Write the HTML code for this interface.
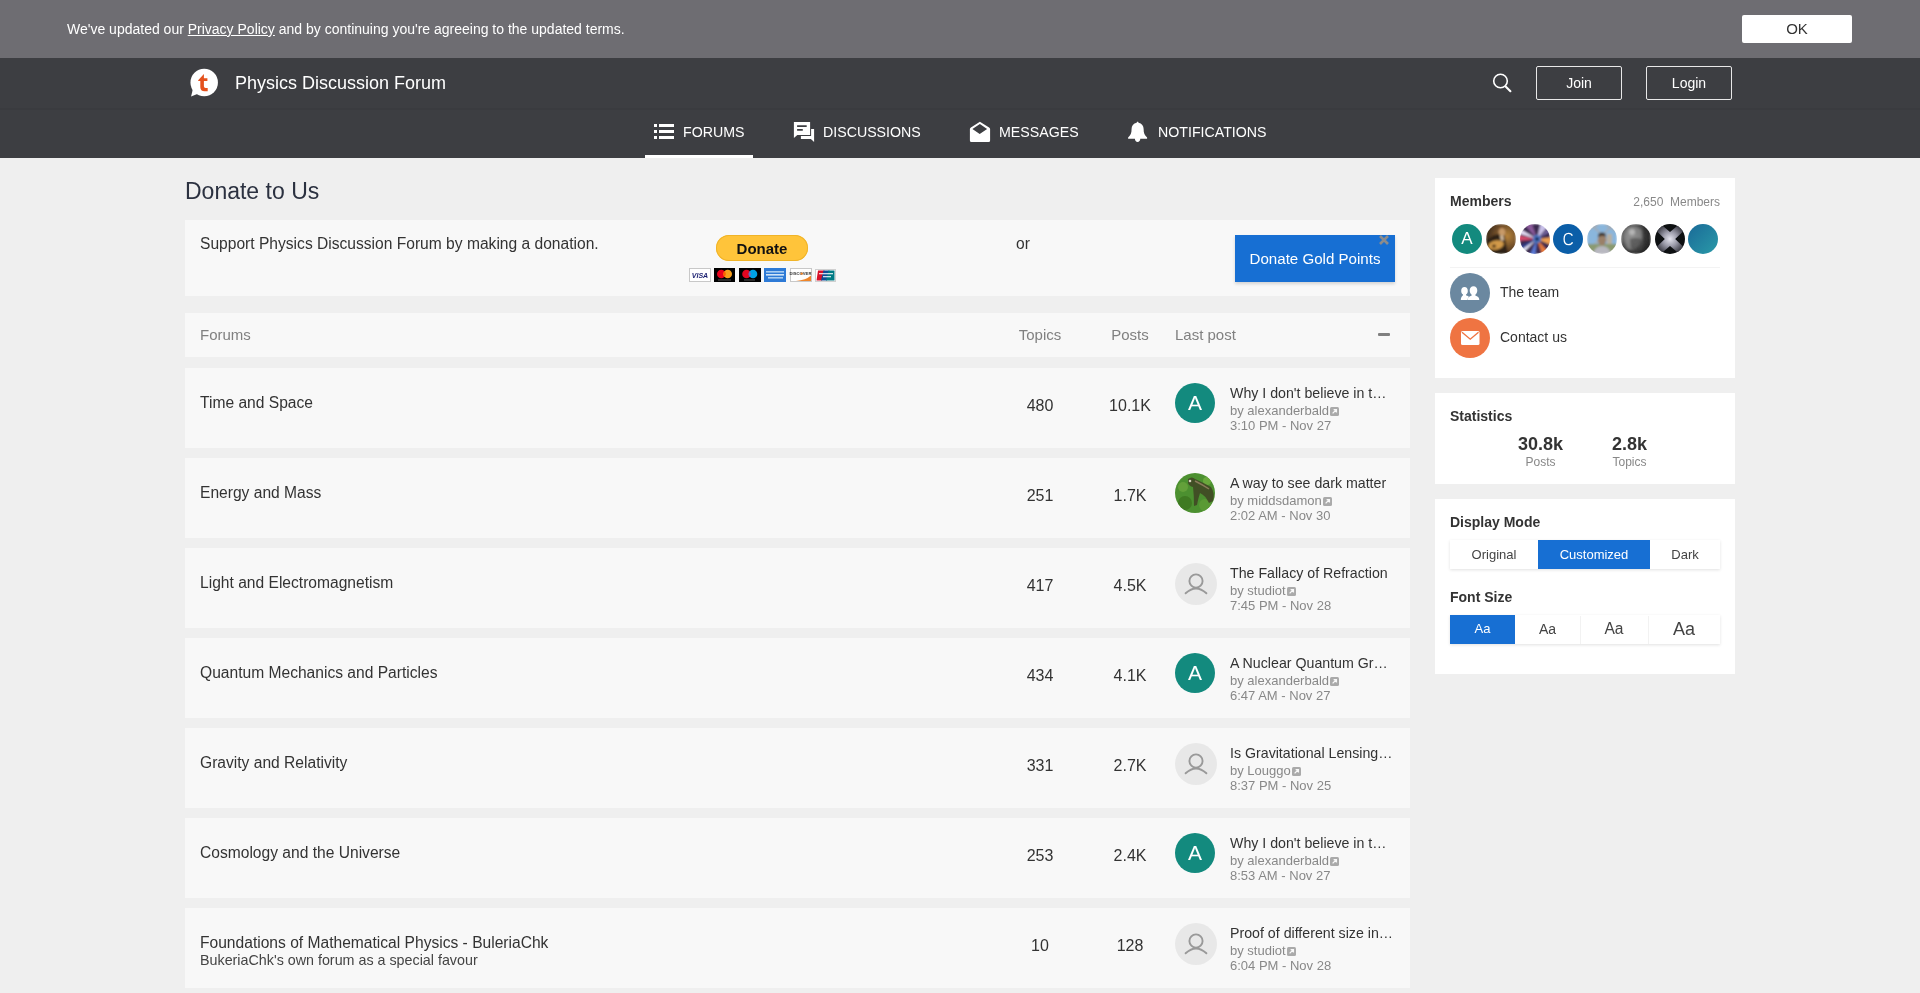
<!DOCTYPE html>
<html><head><meta charset="utf-8">
<style>
*{box-sizing:border-box;margin:0;padding:0}
html,body{width:1920px;height:993px;overflow:hidden}
body{background:#efefef;font-family:"Liberation Sans",sans-serif;color:#333;position:relative}
.abs{position:absolute}
#wrap{position:absolute;left:0;top:0;width:1920px;height:993px;will-change:transform}
svg{display:block}
#cookie{left:0;top:0;width:1920px;height:58px;background:#6e6d72}
#cookie .t{left:67px;top:20px;font-size:14px;color:#fff;white-space:nowrap;line-height:18px}
#ok{left:1742px;top:15px;width:110px;height:28px;background:#fff;border-radius:2px;font-size:15px;color:#333;text-align:center;line-height:28px}
#hdr{left:0;top:58px;width:1920px;height:50px;background:#3d3e42}
#nav{left:0;top:108px;width:1920px;height:50px;background:#3d3e42;border-top:2px solid #3a3b3f}
.title{left:235px;top:72px;font-size:18px;color:#fff;white-space:nowrap;line-height:22px}
.btn{top:66px;width:86px;height:34px;border:1px solid #e8e8e8;border-radius:2px;color:#fff;font-size:14px;text-align:center;line-height:32px}
.navi{top:122px;color:#fff;font-size:14.2px;line-height:20px;white-space:nowrap}
.card{background:#f8f8f8}
.side{background:#fff}
.fname{left:200px;font-size:15.6px;line-height:20px;color:#333;white-space:nowrap}
.fdesc{left:200px;font-size:14.3px;line-height:18px;color:#444;white-space:nowrap}
.num{font-size:16px;line-height:20px;color:#333;text-align:center;width:80px}
.lp-t{left:1230px;font-size:14.2px;line-height:18px;color:#333;white-space:nowrap}
.lp-s{left:1230px;font-size:13px;line-height:16px;color:#888;white-space:nowrap}
.lp-s .ext{display:inline-block;vertical-align:-1px;margin-left:1px}
.av{left:1175px;width:40px;height:40px;border-radius:50%}
.avA{background:#138a7e;color:#fff;font-size:21px;line-height:40px;text-align:center}
.avP{background:radial-gradient(circle at 55% 40%,#6b7a45 0%,#4e7a28 35%,#3f6e1f 70%,#2c4e16 100%)}
.avD{left:1175px;width:42px;height:42px;border-radius:50%;background:#e8e8e8}
.hd{font-size:15px;line-height:20px;color:#808080;white-space:nowrap}
.sh{left:1450px;font-size:14px;font-weight:700;line-height:18px;color:#333;white-space:nowrap}
.mav{top:224px;width:30px;height:30px;border-radius:50%}
.seg{background:#fff;box-shadow:0 1px 3px rgba(0,0,0,0.12)}
.segt{font-size:13px;line-height:16px;color:#444;text-align:center;white-space:nowrap}
</style></head><body><div id="wrap">
<div id="cookie" class="abs">
  <div class="t abs">We've updated our <u>Privacy Policy</u> and by continuing you're agreeing to the updated terms.</div>
  <div id="ok" class="abs">OK</div>
</div>
<div id="hdr" class="abs"></div>
<div id="nav" class="abs"></div>
<svg class="abs" style="left:188px;top:66px" width="34" height="34" viewBox="0 0 34 34">
  <circle cx="16.2" cy="16.5" r="13.75" fill="#fff"/>
  <path d="M3.1 30.6 L5 22.5 L10.5 27.6 Z" fill="#fff"/>
  <path d="M15.9 8 V12.2 H19.4 V15 H15.9 V20.3 Q15.9 22 17.6 22 H19.7 V25.2 H16.6 Q12.3 25.2 12.3 21 V15 H10.2 V14.2 Z" fill="#e4511d"/>
</svg>
<div class="title abs">Physics Discussion Forum</div>
<svg class="abs" style="left:1488px;top:68px" width="28" height="28" viewBox="0 0 28 28">
  <circle cx="12.5" cy="13" r="6.8" fill="none" stroke="#fff" stroke-width="1.6"/>
  <path d="M17.6 18.4 L22.4 23.2" stroke="#fff" stroke-width="2.1" stroke-linecap="round"/>
</svg>
<div class="btn abs" style="left:1536px">Join</div>
<div class="btn abs" style="left:1646px">Login</div>

<svg class="abs" style="left:650px;top:118px" width="30" height="27" viewBox="0 0 30 27">
  <rect x="4" y="6" width="3" height="3" fill="#fff"/><rect x="9" y="6" width="15" height="3" fill="#fff"/>
  <rect x="4" y="12" width="3" height="3" fill="#fff"/><rect x="9" y="12" width="15" height="3" fill="#fff"/>
  <rect x="4" y="18" width="3" height="3" fill="#fff"/><rect x="9" y="18" width="15" height="3" fill="#fff"/>
</svg>
<div class="navi abs" style="left:683px">FORUMS</div>
<div class="abs" style="left:645px;top:155px;width:108px;height:3px;background:#fff"></div>
<svg class="abs" style="left:790px;top:118px" width="30" height="27" viewBox="0 0 30 27">
  <path fill="#fff" fill-rule="evenodd" d="M3.9 3.9 H20.1 V17 H7.3 L3.9 20.1 Z M7.1 7.2 V8.9 H16.7 V7.2 Z M7.1 11.1 V12.8 H12.8 V11.1 Z"/>
  <path fill="#fff" d="M21.1 10.9 H24.1 V23.9 L20.9 21.1 H10.9 V18.1 H21.1 Z"/>
</svg>
<div class="navi abs" style="left:823px">DISCUSSIONS</div>
<svg class="abs" style="left:966px;top:118px" width="30" height="27" viewBox="0 0 30 27">
  <path fill="#fff" fill-rule="evenodd" d="M3.9 10.9 Q3.9 10 4.9 9.4 L13.9 3.8 L23.1 9.4 Q24.1 10 24.1 10.9 V22.6 Q24.1 24.1 22.6 24.1 H5.4 Q3.9 24.1 3.9 22.6 Z M13.9 5.9 L6.4 10.9 L13.7 16 L21.1 10.9 Z"/>
</svg>
<div class="navi abs" style="left:999px">MESSAGES</div>
<svg class="abs" style="left:1124px;top:118px" width="30" height="27" viewBox="0 0 30 27">
  <path fill="#fff" d="M13.6 3.8 C14.3 3.8 14.5 4.3 14.5 4.8 C17.9 5.6 19.6 7.8 19.6 10.8 C19.6 15.2 20.6 17.4 23.1 19.5 V20.7 H4.1 V19.5 C6.6 17.4 7.6 15.2 7.6 10.8 C7.6 7.8 9.3 5.6 12.7 4.8 C12.7 4.3 12.9 3.8 13.6 3.8 Z M10.9 20.7 H16.3 C16.3 22.6 15.1 23.9 13.6 23.9 C12.1 23.9 10.9 22.6 10.9 20.7 Z"/>
</svg>
<div class="navi abs" style="left:1158px">NOTIFICATIONS</div>

<div class="abs" style="left:185px;top:177px;font-size:23px;line-height:28px;color:#2b3140;white-space:nowrap">Donate to Us</div>

<div class="card abs" style="left:185px;top:220px;width:1225px;height:76px"></div>
<div class="abs" style="left:200px;top:233.6px;font-size:15.6px;line-height:20px;color:#333;white-space:nowrap">Support Physics Discussion Forum by making a donation.</div>
<div class="abs" style="left:716px;top:235px;width:92px;height:26px;border-radius:13px;background:#ffc43a;box-shadow:inset 0 0 0 1px #f0b429"></div>
<div class="abs" style="left:716px;top:238.5px;width:92px;text-align:center;font-size:15px;font-weight:700;line-height:20px;color:#111">Donate</div>
<svg class="abs" style="left:688px;top:267px" width="150" height="16" viewBox="0 0 150 16">
  <rect x="1.5" y="1.5" width="21" height="13" fill="#fff" stroke="#c8c8c8" stroke-width="1"/>
  <text x="12" y="11" font-family="Liberation Sans" font-size="7" font-weight="700" font-style="italic" fill="#1a1f71" text-anchor="middle">VISA</text>
  <rect x="26" y="1" width="21" height="14" fill="#000"/>
  <circle cx="33.3" cy="7" r="4.3" fill="#eb001b"/><circle cx="39.7" cy="7" r="4.3" fill="#f79e1b"/><path d="M36.5 4.1 A4.3 4.3 0 0 1 36.5 9.9 A4.3 4.3 0 0 1 36.5 4.1 Z" fill="#ff5f00"/>
  <rect x="30" y="12.5" width="13" height="1" fill="#555"/>
  <rect x="51" y="1" width="22" height="14" fill="#000"/>
  <circle cx="58.5" cy="7" r="4.3" fill="#e40620"/><circle cx="65" cy="7" r="4.3" fill="#00a2e5"/><path d="M61.75 4.2 A4.3 4.3 0 0 1 61.75 9.8 A4.3 4.3 0 0 1 61.75 4.2 Z" fill="#6c6bbd"/>
  <rect x="56" y="12.5" width="11" height="1" fill="#555"/>
  <rect x="76" y="1" width="22" height="14" fill="#2d7ad6"/>
  <rect x="78" y="4" width="18" height="1.6" fill="#a8cdf2"/><rect x="78" y="7" width="18" height="1.6" fill="#cfe4f8"/><rect x="80" y="10" width="15" height="1.6" fill="#a8cdf2"/>
  <rect x="102.5" y="1.5" width="21" height="13" fill="#fff" stroke="#c8c8c8" stroke-width="1"/>
  <path d="M108 14 Q118 13 123 8.5 V14 Z" fill="#f0862a"/>
  <text x="112.5" y="8" font-family="Liberation Sans" font-size="4.2" font-weight="700" fill="#333" text-anchor="middle">DISCOVER</text>
  <circle cx="113.7" cy="6.6" r="1.2" fill="#f0862a"/>
  <rect x="127.5" y="2.5" width="20" height="12" fill="#fff" stroke="#d0d0d0" stroke-width="1"/>
  <path d="M130 3.5 H136.5 L134 13.5 H128.5 Z" fill="#d8102a"/><path d="M135.5 3.5 H141.5 L139 13.5 H133 Z" fill="#0e4c96"/><path d="M140.5 3.5 H146.5 V13.5 H138 Z" fill="#007b84"/>
  <rect x="131" y="6" width="14" height="1.3" fill="#fff" opacity="0.8"/><rect x="135" y="9" width="8" height="1.3" fill="#fff" opacity="0.8"/>
</svg>
<div class="abs" style="left:1016px;top:233.6px;font-size:15.6px;line-height:20px;color:#333">or</div>
<div class="abs" style="left:1235px;top:235px;width:160px;height:47px;background:#176fd3;box-shadow:0 2px 3px rgba(0,0,0,0.15)"></div>
<div class="abs" style="left:1235px;top:248.9px;width:160px;text-align:center;font-size:15.1px;line-height:20px;color:#fff;white-space:nowrap">Donate Gold Points</div>
<svg class="abs" style="left:1378px;top:234px" width="12" height="12" viewBox="0 0 12 12"><path d="M2 2 L10 10 M10 2 L2 10" stroke="#8c8c8c" stroke-width="2.6"/></svg>

<div class="card abs" style="left:185px;top:313px;width:1225px;height:44px"></div>
<div class="hd abs" style="left:200px;top:324.7px">Forums</div>
<div class="hd abs" style="left:1000px;top:324.5px;width:80px;text-align:center">Topics</div>
<div class="hd abs" style="left:1090px;top:324.5px;width:80px;text-align:center">Posts</div>
<div class="hd abs" style="left:1175px;top:324.5px">Last post</div>
<div class="abs" style="left:1378px;top:333px;width:12px;height:3px;background:#808080;border-radius:1px"></div>
<div class="card abs" style="left:185px;top:368px;width:1225px;height:80px"></div>
<div class="fname abs" style="top:393px">Time and Space</div>
<div class="num abs" style="left:1000px;top:395.5px">480</div>
<div class="num abs" style="left:1090px;top:395.5px">10.1K</div>
<div class="av avA abs" style="top:383px">A</div>
<div class="lp-t abs" style="top:384px">Why I don't believe in t…</div>
<div class="lp-s abs" style="top:403px">by alexanderbald<svg class="ext" width="9" height="9" viewBox="0 0 9 9"><rect x="0" y="0" width="9" height="9" rx="1.5" fill="#aaa"/><path d="M2.6 6.4 L6.2 2.8 M3.6 2.6 H6.4 V5.4" stroke="#f8f8f8" stroke-width="1.3" fill="none"/></svg></div>
<div class="lp-s abs" style="top:418px">3:10 PM - Nov 27</div>
<div class="card abs" style="left:185px;top:458px;width:1225px;height:80px"></div>
<div class="fname abs" style="top:483px">Energy and Mass</div>
<div class="num abs" style="left:1000px;top:485.5px">251</div>
<div class="num abs" style="left:1090px;top:485.5px">1.7K</div>
<svg class="abs" style="left:1175px;top:473px" width="40" height="40" viewBox="0 0 40 40"><defs><clipPath id="cp1"><circle cx="20" cy="20" r="20"/></clipPath></defs><g clip-path="url(#cp1)"><rect width="40" height="40" fill="#4c9030"/><circle cx="8" cy="14" r="5" fill="#63a03a"/><circle cx="10" cy="30" r="7" fill="#3f7a22"/><circle cx="30" cy="32" r="6" fill="#5a9a34"/><circle cx="32" cy="8" r="4" fill="#6aa83c"/><path d="M13 6 Q17 3 20 6 Q27 9 36 14 Q40 20 38 28 L34 30 Q30 22 25 20 Q23 26 22 32 L19 33 Q19 22 18 14 Q14 13 13 10 Z" fill="#3e3a22" opacity="0.75"/><circle cx="15" cy="8" r="1.3" fill="#d8d0c0"/><path d="M20 8 Q28 12 34 16" stroke="#8a7a5a" stroke-width="1.5" fill="none"/></g></svg>
<div class="lp-t abs" style="top:474px">A way to see dark matter</div>
<div class="lp-s abs" style="top:493px">by middsdamon<svg class="ext" width="9" height="9" viewBox="0 0 9 9"><rect x="0" y="0" width="9" height="9" rx="1.5" fill="#aaa"/><path d="M2.6 6.4 L6.2 2.8 M3.6 2.6 H6.4 V5.4" stroke="#f8f8f8" stroke-width="1.3" fill="none"/></svg></div>
<div class="lp-s abs" style="top:508px">2:02 AM - Nov 30</div>
<div class="card abs" style="left:185px;top:548px;width:1225px;height:80px"></div>
<div class="fname abs" style="top:573px">Light and Electromagnetism</div>
<div class="num abs" style="left:1000px;top:575.5px">417</div>
<div class="num abs" style="left:1090px;top:575.5px">4.5K</div>
<div class="avD abs" style="top:563px"><svg width="42" height="42" viewBox="0 0 42 42"><circle cx="21" cy="18" r="6.6" fill="none" stroke="#999" stroke-width="1.9"/><path d="M10.6 30.3 Q21 20.5 31.4 30.3" fill="none" stroke="#999" stroke-width="1.9" stroke-linecap="round"/></svg></div>
<div class="lp-t abs" style="top:564px">The Fallacy of Refraction</div>
<div class="lp-s abs" style="top:583px">by studiot<svg class="ext" width="9" height="9" viewBox="0 0 9 9"><rect x="0" y="0" width="9" height="9" rx="1.5" fill="#aaa"/><path d="M2.6 6.4 L6.2 2.8 M3.6 2.6 H6.4 V5.4" stroke="#f8f8f8" stroke-width="1.3" fill="none"/></svg></div>
<div class="lp-s abs" style="top:598px">7:45 PM - Nov 28</div>
<div class="card abs" style="left:185px;top:638px;width:1225px;height:80px"></div>
<div class="fname abs" style="top:663px">Quantum Mechanics and Particles</div>
<div class="num abs" style="left:1000px;top:665.5px">434</div>
<div class="num abs" style="left:1090px;top:665.5px">4.1K</div>
<div class="av avA abs" style="top:653px">A</div>
<div class="lp-t abs" style="top:654px">A Nuclear Quantum Gr…</div>
<div class="lp-s abs" style="top:673px">by alexanderbald<svg class="ext" width="9" height="9" viewBox="0 0 9 9"><rect x="0" y="0" width="9" height="9" rx="1.5" fill="#aaa"/><path d="M2.6 6.4 L6.2 2.8 M3.6 2.6 H6.4 V5.4" stroke="#f8f8f8" stroke-width="1.3" fill="none"/></svg></div>
<div class="lp-s abs" style="top:688px">6:47 AM - Nov 27</div>
<div class="card abs" style="left:185px;top:728px;width:1225px;height:80px"></div>
<div class="fname abs" style="top:753px">Gravity and Relativity</div>
<div class="num abs" style="left:1000px;top:755.5px">331</div>
<div class="num abs" style="left:1090px;top:755.5px">2.7K</div>
<div class="avD abs" style="top:743px"><svg width="42" height="42" viewBox="0 0 42 42"><circle cx="21" cy="18" r="6.6" fill="none" stroke="#999" stroke-width="1.9"/><path d="M10.6 30.3 Q21 20.5 31.4 30.3" fill="none" stroke="#999" stroke-width="1.9" stroke-linecap="round"/></svg></div>
<div class="lp-t abs" style="top:744px">Is Gravitational Lensing…</div>
<div class="lp-s abs" style="top:763px">by Louggo<svg class="ext" width="9" height="9" viewBox="0 0 9 9"><rect x="0" y="0" width="9" height="9" rx="1.5" fill="#aaa"/><path d="M2.6 6.4 L6.2 2.8 M3.6 2.6 H6.4 V5.4" stroke="#f8f8f8" stroke-width="1.3" fill="none"/></svg></div>
<div class="lp-s abs" style="top:778px">8:37 PM - Nov 25</div>
<div class="card abs" style="left:185px;top:818px;width:1225px;height:80px"></div>
<div class="fname abs" style="top:843px">Cosmology and the Universe</div>
<div class="num abs" style="left:1000px;top:845.5px">253</div>
<div class="num abs" style="left:1090px;top:845.5px">2.4K</div>
<div class="av avA abs" style="top:833px">A</div>
<div class="lp-t abs" style="top:834px">Why I don't believe in t…</div>
<div class="lp-s abs" style="top:853px">by alexanderbald<svg class="ext" width="9" height="9" viewBox="0 0 9 9"><rect x="0" y="0" width="9" height="9" rx="1.5" fill="#aaa"/><path d="M2.6 6.4 L6.2 2.8 M3.6 2.6 H6.4 V5.4" stroke="#f8f8f8" stroke-width="1.3" fill="none"/></svg></div>
<div class="lp-s abs" style="top:868px">8:53 AM - Nov 27</div>
<div class="card abs" style="left:185px;top:908px;width:1225px;height:80px"></div>
<div class="fname abs" style="top:933px">Foundations of Mathematical Physics - BuleriaChk</div>
<div class="fdesc abs" style="top:950.7px">BukeriaChk's own forum as a special favour</div>
<div class="num abs" style="left:1000px;top:935.5px">10</div>
<div class="num abs" style="left:1090px;top:935.5px">128</div>
<div class="avD abs" style="top:923px"><svg width="42" height="42" viewBox="0 0 42 42"><circle cx="21" cy="18" r="6.6" fill="none" stroke="#999" stroke-width="1.9"/><path d="M10.6 30.3 Q21 20.5 31.4 30.3" fill="none" stroke="#999" stroke-width="1.9" stroke-linecap="round"/></svg></div>
<div class="lp-t abs" style="top:924px">Proof of different size in…</div>
<div class="lp-s abs" style="top:943px">by studiot<svg class="ext" width="9" height="9" viewBox="0 0 9 9"><rect x="0" y="0" width="9" height="9" rx="1.5" fill="#aaa"/><path d="M2.6 6.4 L6.2 2.8 M3.6 2.6 H6.4 V5.4" stroke="#f8f8f8" stroke-width="1.3" fill="none"/></svg></div>
<div class="lp-s abs" style="top:958px">6:04 PM - Nov 28</div><div class="side abs" style="left:1435px;top:178px;width:300px;height:200px"></div>
<div class="sh abs" style="top:192px">Members</div>
<div class="abs" style="left:1560px;top:193.6px;width:160px;text-align:right;font-size:12px;line-height:16px;color:#888;white-space:nowrap">2,650&nbsp; Members</div>
<div class="mav abs" style="left:1452px;background:#138a7e;color:#fff;font-size:17px;line-height:30px;text-align:center">A</div>
<svg class="abs" style="left:1486px;top:224px" width="30" height="30" viewBox="0 0 30 30"><defs><clipPath id="c2"><circle cx="15" cy="15" r="15"/></clipPath><filter id="fc2" x="-10%" y="-10%" width="120%" height="120%"><feGaussianBlur stdDeviation="0.9"/></filter>
<radialGradient id="g2" cx="0.7" cy="0.4" r="0.7"><stop offset="0" stop-color="#b8843a"/><stop offset="0.6" stop-color="#6a4a28"/><stop offset="1" stop-color="#3a2818"/></radialGradient></defs>
<g clip-path="url(#c2)"><g filter="url(#fc2)"><rect width="30" height="30" fill="url(#g2)"/>
<path d="M4 14 Q10 9 18 10 L22 30 H0 V16 Z" fill="#2e2016"/>
<ellipse cx="16" cy="8" rx="3.2" ry="4" fill="#c89a68"/><path d="M12.5 6 Q16 1.5 19.5 6 L19 4 Q16 1 13 4 Z" fill="#7a4a20"/>
<path d="M14 12 L17 11 L18 16 L15 17 Z" fill="#d8c0a0"/>
<ellipse cx="10" cy="21" rx="8" ry="4.5" fill="#d29a48" transform="rotate(-12 10 21)"/>
<ellipse cx="8" cy="22" rx="2" ry="1.6" fill="#3a2410"/></g></g></svg>
<svg class="abs" style="left:1519.5px;top:224px" width="30" height="30" viewBox="0 0 30 30"><defs><clipPath id="c3"><circle cx="15" cy="15" r="15"/></clipPath><filter id="fc3" x="-10%" y="-10%" width="120%" height="120%"><feGaussianBlur stdDeviation="0.9"/></filter></defs>
<g clip-path="url(#c3)"><g filter="url(#fc3)"><rect width="30" height="30" fill="#3a2a50"/>
<g transform="translate(17 15)">
<path d="M0 0 L-20 -12 L-20 -6 Z" fill="#e8e0f8"/><path d="M0 0 L-20 -4 L-20 2 Z" fill="#d84a6a"/>
<path d="M0 0 L-18 8 L-14 14 Z" fill="#f0f0ff"/><path d="M0 0 L-8 18 L-2 18 Z" fill="#5a7ad8"/>
<path d="M0 0 L6 18 L14 16 Z" fill="#e87a3a"/><path d="M0 0 L18 8 L18 -2 Z" fill="#f0a050"/>
<path d="M0 0 L14 -16 L4 -18 Z" fill="#c8c0e8"/><path d="M0 0 L-6 -18 L-14 -16 Z" fill="#8a5a9a"/>
<path d="M0 0 L-20 14 L-20 8 Z" fill="#2a3a8a"/><path d="M0 0 L18 -10 L18 -16 Z" fill="#7a6aaa"/>
<circle r="4" fill="#4a7ac8"/><circle r="2" fill="#1a2050"/></g></g></g></svg>
<div class="mav abs" style="left:1553px;background:#0b5ea8"></div>
<svg class="abs" style="left:1553px;top:224px" width="30" height="30" viewBox="0 0 30 30"><path d="M19.3 11.7 Q18.4 9.4 15.6 9.4 Q11.1 9.4 11.1 15 Q11.1 20.7 15.6 20.7 Q18.6 20.7 19.5 18.3" fill="none" stroke="#fff" stroke-width="1.3"/></svg>
<svg class="abs" style="left:1587px;top:224px" width="30" height="30" viewBox="0 0 30 30"><defs><clipPath id="c5"><circle cx="15" cy="15" r="15"/></clipPath><filter id="fc5" x="-10%" y="-10%" width="120%" height="120%"><feGaussianBlur stdDeviation="0.9"/></filter></defs>
<g clip-path="url(#c5)"><g filter="url(#fc5)"><rect width="30" height="30" fill="#8ab6dc"/>
<path d="M0 6 L12 0 M18 0 L30 8 M4 0 L22 18 M26 0 L8 20" stroke="#a8a8a8" stroke-width="1.4"/>
<rect x="20" y="10" width="5" height="20" fill="#b8b0a0"/><rect x="0" y="20" width="30" height="10" fill="#8a9a70"/>
<ellipse cx="15" cy="16" rx="4.2" ry="5.5" fill="#9a8068"/><path d="M10.8 13 Q11 8.6 15 8.6 Q19 8.6 19.2 13 Q17 10.5 10.8 13 Z" fill="#3a3028"/>
<path d="M6 30 Q8 22 15 22 Q22 22 24 30 Z" fill="#b8b8c0"/></g></g></svg>
<svg class="abs" style="left:1621px;top:224px" width="30" height="30" viewBox="0 0 30 30"><defs><clipPath id="c6"><circle cx="15" cy="15" r="15"/></clipPath><filter id="fc6" x="-10%" y="-10%" width="120%" height="120%"><feGaussianBlur stdDeviation="0.9"/></filter>
<radialGradient id="g6" cx="0.35" cy="0.4" r="0.7"><stop offset="0" stop-color="#a8a8a8"/><stop offset="0.5" stop-color="#5a5a5a"/><stop offset="1" stop-color="#1a1a1a"/></radialGradient></defs>
<g clip-path="url(#c6)"><g filter="url(#fc6)"><rect width="30" height="30" fill="url(#g6)"/>
<path d="M6 4 Q14 0 20 6 Q22 14 18 22 Q12 28 6 24 Q2 14 6 4 Z" fill="#8a8a8a" opacity="0.7"/>
<path d="M9 15 Q14 13 20 15 Q22 19 20 24 Q15 27 10 24 Z" fill="#3a3a3a" opacity="0.5"/><circle cx="11" cy="8" r="3" fill="#c8c8c8" opacity="0.7"/>
<rect x="22" y="0" width="8" height="30" fill="#2a2a2a" opacity="0.6"/></g></g></svg>
<svg class="abs" style="left:1654.5px;top:224px" width="30" height="30" viewBox="0 0 30 30"><defs><clipPath id="c7"><circle cx="15" cy="15" r="15"/></clipPath>
<radialGradient id="g7" cx="0.5" cy="0.5" r="0.55"><stop offset="0" stop-color="#e4e4ee"/><stop offset="0.45" stop-color="#9a9aa8"/><stop offset="1" stop-color="#2a2a32"/></radialGradient></defs>
<g clip-path="url(#c7)"><rect width="30" height="30" fill="#0e1012"/>
<path d="M0 0 H5.5 L15 8 L24.5 0 H30 V5.5 L20.2 15 L30 24.5 V30 H24.5 L15 22 L5.5 30 H0 V24.5 L9.8 15 L0 5.5 Z" fill="url(#g7)"/></g></svg>
<svg class="abs" style="left:1688px;top:224px" width="30" height="30" viewBox="0 0 30 30"><defs><linearGradient id="g8" x1="0" y1="0" x2="1" y2="1"><stop offset="0" stop-color="#1a6a98"/><stop offset="1" stop-color="#2a9aa8"/></linearGradient></defs><circle cx="15" cy="15" r="15" fill="url(#g8)"/></svg>
<div class="abs" style="left:1450px;top:267px;width:270px;height:1px;background:#f3f3f3"></div>
<div class="abs" style="left:1450px;top:273px;width:40px;height:40px;border-radius:50%;background:#6b88a0"></div>
<svg class="abs" style="left:1450px;top:273px" width="40" height="40" viewBox="0 0 40 40">
  <path fill="#fff" d="M14.5 14 C16.6 14 17.8 15.7 17.8 17.9 C17.8 19.6 17 21 16 21.6 V22.3 C17.6 22.8 18.5 23.3 19 24 C18.2 24.6 17.6 25.6 17.6 27 H10.8 C10.8 24.7 12 23.2 13 22.3 V21.6 C12 21 11.2 19.6 11.2 17.9 C11.2 15.7 12.4 14 14.5 14 Z"/>
  <path fill="#fff" d="M23.5 13.3 C25.9 13.3 27.3 15.2 27.3 17.6 C27.3 19.5 26.4 21.1 25.3 21.8 V22.6 C27.6 23.3 29.3 24.6 29.3 27 H17.7 C17.7 24.6 19.4 23.3 21.7 22.6 V21.8 C20.6 21.1 19.7 19.5 19.7 17.6 C19.7 15.2 21.1 13.3 23.5 13.3 Z"/>
</svg>
<div class="abs" style="left:1500px;top:283.2px;font-size:14px;line-height:18px;color:#333;white-space:nowrap">The team</div>
<div class="abs" style="left:1450px;top:318px;width:40px;height:40px;border-radius:50%;background:#ef7442"></div>
<svg class="abs" style="left:1450px;top:318px" width="40" height="40" viewBox="0 0 40 40">
  <rect x="11" y="13" width="18.5" height="14" rx="1.5" fill="#fff"/>
  <path d="M12 14.2 L20.25 21.2 L28.5 14.2" fill="none" stroke="#ef7442" stroke-width="1.4"/>
</svg>
<div class="abs" style="left:1500px;top:327.9px;font-size:14px;line-height:18px;color:#333;white-space:nowrap">Contact us</div>

<div class="side abs" style="left:1435px;top:393px;width:300px;height:91px"></div>
<div class="sh abs" style="top:407px">Statistics</div>
<div class="abs" style="left:1500px;top:432.8px;width:81px;text-align:center;font-size:18px;font-weight:700;line-height:22px;color:#333">30.8k</div>
<div class="abs" style="left:1500px;top:454.4px;width:81px;text-align:center;font-size:12px;line-height:16px;color:#888">Posts</div>
<div class="abs" style="left:1589px;top:432.8px;width:81px;text-align:center;font-size:18px;font-weight:700;line-height:22px;color:#333">2.8k</div>
<div class="abs" style="left:1589px;top:454.4px;width:81px;text-align:center;font-size:12px;line-height:16px;color:#888">Topics</div>

<div class="side abs" style="left:1435px;top:499px;width:300px;height:175px"></div>
<div class="sh abs" style="top:513px">Display Mode</div>
<div class="seg abs" style="left:1450px;top:540px;width:270px;height:29px"></div>
<div class="abs" style="left:1538px;top:540px;width:112px;height:29px;background:#176fd3"></div>
<div class="segt abs" style="left:1450px;top:547.4px;width:88px">Original</div>
<div class="segt abs" style="left:1538px;top:547.4px;width:112px;color:#fff">Customized</div>
<div class="segt abs" style="left:1650px;top:547.4px;width:70px">Dark</div>

<div class="sh abs" style="top:588px">Font Size</div>
<div class="seg abs" style="left:1450px;top:615px;width:270px;height:29px"></div>
<div class="abs" style="left:1450px;top:615px;width:65px;height:29px;background:#176fd3"></div>
<div class="abs" style="left:1580px;top:616px;width:1px;height:28px;background:#f2f2f2"></div>
<div class="abs" style="left:1648px;top:616px;width:1px;height:28px;background:#f2f2f2"></div>
<div class="abs" style="left:1450px;top:620.5px;width:65px;text-align:center;font-size:13px;line-height:16px;color:#fff">Aa</div>
<div class="abs" style="left:1515px;top:620.5px;width:65px;text-align:center;font-size:14px;line-height:17px;color:#444">Aa</div>
<div class="abs" style="left:1580px;top:619.2px;width:68px;text-align:center;font-size:15.6px;line-height:19px;color:#444">Aa</div>
<div class="abs" style="left:1648px;top:617.5px;width:72px;text-align:center;font-size:18px;line-height:22px;color:#444">Aa</div>

</div></body></html>
